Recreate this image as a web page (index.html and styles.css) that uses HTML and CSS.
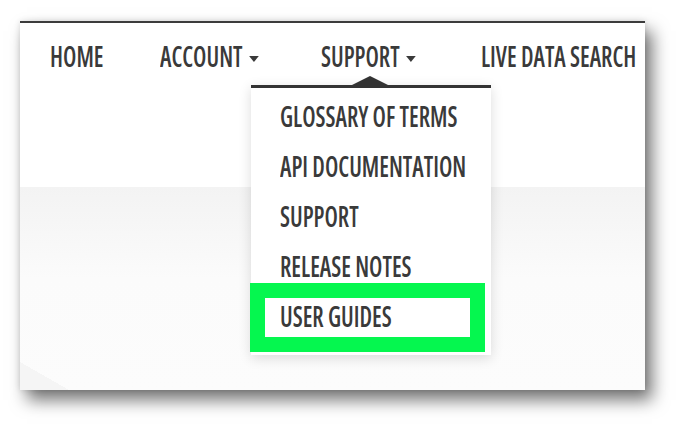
FILE: index.html
```html
<!DOCTYPE html>
<html lang="en">
<head>
  <meta charset="UTF-8">
  <meta name="viewport" content="width=device-width, initial-scale=1.0">
  <title>Support menu</title>
  <link rel="stylesheet" href="styles.css">
</head>
<body>

  <div class="frame">
    <nav class="navbar">
      <a class="nav-item"><span class="label">Home</span></a>
      <a class="nav-item"><span class="label">Account <i class="caret"></i></span></a>
      <a class="nav-item"><span class="label">Support <i class="caret"></i></span></a>
      <a class="nav-item"><span class="label">Live Data Search</span></a>
    </nav>

    <div class="content"></div>

    <ul class="dropdown">
      <li><span class="label">Glossary of Terms</span></li>
      <li><span class="label">API Documentation</span></li>
      <li><span class="label">Support</span></li>
      <li><span class="label">Release Notes</span></li>
      <li><span class="label">User Guides</span></li>
      <div class="highlight"></div>
    </ul>
  </div>

</body>
</html>
```
FILE: styles.css
```css
* {
  box-sizing: border-box;
}

body {
  margin: 0;
  padding-bottom: 42px;
  background: #fff;
  font-family: "Open Sans", sans-serif;
  color: #3a3a3a;
}

.frame {
  position: relative;
  width: 625px;
  height: 369px;
  margin: 21px 0 0 20px;
  border-top: 2px solid #3c3c3c;
  background: #fff;
  display: flex;
  flex-direction: column;
  box-shadow: 7px 10px 16px rgba(0, 0, 0, 0.55), 0 0 6px rgba(0, 0, 0, 0.12);
}

.label {
  display: inline-block;
  font-size: 29px;
  font-weight: 600;
  font-stretch: condensed;
  text-transform: uppercase;
  white-space: nowrap;
  transform: scaleX(0.81);
  transform-origin: left center;
}

.navbar {
  display: grid;
  grid-template-columns: 110px 161px 160px 1fr;
  height: 164px;
  padding: 13px 0 0 30px;
  line-height: 40px;
}

.nav-item {
  color: #3a3a3a;
  cursor: pointer;
}

.caret {
  display: inline-block;
  vertical-align: middle;
  margin-left: 3px;
  border-left: 6px solid transparent;
  border-right: 6px solid transparent;
  border-top: 6px solid #3a3a3a;
}

.content {
  flex: 1;
  background:
    linear-gradient(to top right, #f5f5f5 50%, transparent 50%) left bottom / 49px 28px no-repeat,
    linear-gradient(#f3f3f3, #fbfbfb 45%, #fcfcfc);
}

.dropdown {
  position: absolute;
  left: 231px;
  top: 62px;
  width: 240px;
  height: 270px;
  margin: 0;
  padding: 3px 0 0 29px;
  list-style: none;
  background: #fff;
  border-top: 3px solid #333;
  box-shadow: 0 3px 12px rgba(0, 0, 0, 0.14);
  line-height: 50px;
}

.dropdown::before {
  content: "";
  position: absolute;
  left: 101px;
  top: -12px;
  border-left: 18px solid transparent;
  border-right: 18px solid transparent;
  border-bottom: 9px solid #333;
}

.dropdown li {
  height: 50px;
}

.highlight {
  position: absolute;
  left: -1px;
  top: 195px;
  width: 235px;
  height: 69px;
  border: 15px solid #05f74f;
}
```
